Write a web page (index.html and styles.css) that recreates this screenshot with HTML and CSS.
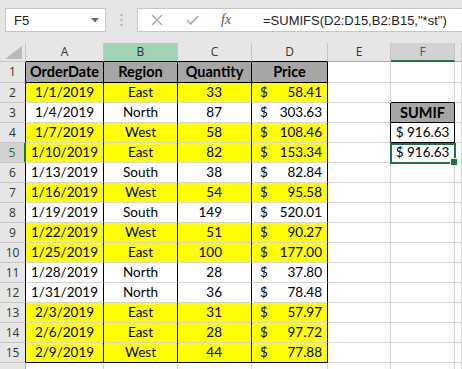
FILE: index.html
```html
<!DOCTYPE html>
<html lang="en">
<head>
    <meta charset="UTF-8">
    <meta name="viewport" content="width=device-width, initial-scale=1.0">
    <title>SUMIFS - Excel</title>
    <link rel="stylesheet" href="styles.css">
</head>
<body>
    <div class="toolbar">
        <div class="namebox">
            <span>F5</span>
            <svg width="8" height="5" viewBox="0 0 8 5"><path d="M0 0H8L4 4.5Z" fill="#6a6a6a"/></svg>
        </div>
        <div class="grip">
            <svg width="3" height="12" viewBox="0 0 3 12"><rect x="0.5" y="0" width="2" height="2" fill="#b4b4b4"/><rect x="0.5" y="5" width="2" height="2" fill="#b4b4b4"/><rect x="0.5" y="10" width="2" height="2" fill="#b4b4b4"/></svg>
        </div>
        <div class="formula">
            <div class="fx-buttons">
                <svg class="btn-cancel" width="12" height="12" viewBox="0 0 12 12"><path d="M1 1L11 11M11 1L1 11" stroke="#a8a8a8" stroke-width="1.4" fill="none"/></svg>
                <svg class="btn-enter" width="13" height="10" viewBox="0 0 13 10"><path d="M1 5.2L4.6 8.8L12 1.2" stroke="#a8a8a8" stroke-width="1.6" fill="none"/></svg>
                <span class="fx">fx</span>
            </div>
            <div class="formula-text">=SUMIFS(D2:D15,B2:B15,"*st")</div>
        </div>
    </div>

    <div class="sheet">
        <div class="row head">
            <div class="c corner"><svg width="17" height="13" viewBox="0 0 17 13"><path d="M17 0V13H0Z" fill="#b9b9b9"/></svg></div>
            <div class="c ch tb">A</div>
            <div class="c ch tb hover">B</div>
            <div class="c ch tb">C</div>
            <div class="c ch tb">D</div>
            <div class="c ch">E</div>
            <div class="c ch active">F</div>
            <div class="c ch"></div>
        </div>

        <div class="row r1">
            <div class="c rh tl">1</div>
            <div class="c t th">OrderDate</div>
            <div class="c t th">Region</div>
            <div class="c t th">Quantity</div>
            <div class="c t th">Price</div>
            <div class="c"></div>
            <div class="c"></div>
            <div class="c"></div>
        </div>
        <div class="row">
            <div class="c rh tl">2</div>
            <div class="c t y date">1/1/2019</div>
            <div class="c t y region">East</div>
            <div class="c t y qty">33</div>
            <div class="c t y price"><span>$</span><span>58.41</span></div>
            <div class="c"></div>
            <div class="c box-top"></div>
            <div class="c"></div>
        </div>
        <div class="row">
            <div class="c rh tl">3</div>
            <div class="c t date">1/4/2019</div>
            <div class="c t region">North</div>
            <div class="c t qty">87</div>
            <div class="c t price"><span>$</span><span>303.63</span></div>
            <div class="c box-left"></div>
            <div class="c box sumif">SUMIF</div>
            <div class="c"></div>
        </div>
        <div class="row">
            <div class="c rh tl">4</div>
            <div class="c t y date">1/7/2019</div>
            <div class="c t y region">West</div>
            <div class="c t y qty">58</div>
            <div class="c t y price"><span>$</span><span>108.46</span></div>
            <div class="c box-left"></div>
            <div class="c box result">$ 916.63</div>
            <div class="c"></div>
        </div>
        <div class="row">
            <div class="c rh tl selected">5</div>
            <div class="c t y date">1/10/2019</div>
            <div class="c t y region">East</div>
            <div class="c t y qty">82</div>
            <div class="c t y price"><span>$</span><span>153.34</span></div>
            <div class="c"></div>
            <div class="c result current">$ 916.63</div>
            <div class="c"></div>
        </div>
        <div class="row">
            <div class="c rh tl">6</div>
            <div class="c t date">1/13/2019</div>
            <div class="c t region">South</div>
            <div class="c t qty">38</div>
            <div class="c t price"><span>$</span><span>82.84</span></div>
            <div class="c"></div>
            <div class="c"></div>
            <div class="c"></div>
        </div>
        <div class="row">
            <div class="c rh tl">7</div>
            <div class="c t y date">1/16/2019</div>
            <div class="c t y region">West</div>
            <div class="c t y qty">54</div>
            <div class="c t y price"><span>$</span><span>95.58</span></div>
            <div class="c"></div>
            <div class="c"></div>
            <div class="c"></div>
        </div>
        <div class="row">
            <div class="c rh tl">8</div>
            <div class="c t date">1/19/2019</div>
            <div class="c t region">South</div>
            <div class="c t qty">149</div>
            <div class="c t price"><span>$</span><span>520.01</span></div>
            <div class="c"></div>
            <div class="c"></div>
            <div class="c"></div>
        </div>
        <div class="row">
            <div class="c rh tl">9</div>
            <div class="c t y date">1/22/2019</div>
            <div class="c t y region">West</div>
            <div class="c t y qty">51</div>
            <div class="c t y price"><span>$</span><span>90.27</span></div>
            <div class="c"></div>
            <div class="c"></div>
            <div class="c"></div>
        </div>
        <div class="row">
            <div class="c rh tl">10</div>
            <div class="c t y date">1/25/2019</div>
            <div class="c t y region">East</div>
            <div class="c t y qty">100</div>
            <div class="c t y price"><span>$</span><span>177.00</span></div>
            <div class="c"></div>
            <div class="c"></div>
            <div class="c"></div>
        </div>
        <div class="row">
            <div class="c rh tl">11</div>
            <div class="c t date">1/28/2019</div>
            <div class="c t region">North</div>
            <div class="c t qty">28</div>
            <div class="c t price"><span>$</span><span>37.80</span></div>
            <div class="c"></div>
            <div class="c"></div>
            <div class="c"></div>
        </div>
        <div class="row">
            <div class="c rh tl">12</div>
            <div class="c t date">1/31/2019</div>
            <div class="c t region">North</div>
            <div class="c t qty">36</div>
            <div class="c t price"><span>$</span><span>78.48</span></div>
            <div class="c"></div>
            <div class="c"></div>
            <div class="c"></div>
        </div>
        <div class="row">
            <div class="c rh tl">13</div>
            <div class="c t y date">2/3/2019</div>
            <div class="c t y region">East</div>
            <div class="c t y qty">31</div>
            <div class="c t y price"><span>$</span><span>57.97</span></div>
            <div class="c"></div>
            <div class="c"></div>
            <div class="c"></div>
        </div>
        <div class="row">
            <div class="c rh tl">14</div>
            <div class="c t y date">2/6/2019</div>
            <div class="c t y region">East</div>
            <div class="c t y qty">28</div>
            <div class="c t y price"><span>$</span><span>97.72</span></div>
            <div class="c"></div>
            <div class="c"></div>
            <div class="c"></div>
        </div>
        <div class="row r15">
            <div class="c rh tl">15</div>
            <div class="c t y date">2/9/2019</div>
            <div class="c t y region">West</div>
            <div class="c t y qty">44</div>
            <div class="c t y price"><span>$</span><span>77.88</span></div>
            <div class="c"></div>
            <div class="c"></div>
            <div class="c"></div>
        </div>
        <div class="row">
            <div class="c rh"></div>
            <div class="c"></div>
            <div class="c"></div>
            <div class="c"></div>
            <div class="c"></div>
            <div class="c"></div>
            <div class="c"></div>
            <div class="c"></div>
        </div>
    </div>
</body>
</html>
```

FILE: styles.css
```css
* {
    box-sizing: border-box;
}
body {
    margin: 0;
    width: 462px;
    height: 369px;
    overflow: hidden;
    background-color: white;
    font-family: "Lato", "Liberation Sans", sans-serif;
    color: #000;
}

/* formula bar */
.toolbar {
    height: 43px;
    background-color: #e6e6e6;
    display: flex;
    align-items: flex-start;
    padding-top: 8px;
    font-family: "Liberation Sans", Arial, sans-serif;
}
.namebox {
    margin-left: 5px;
    width: 101px;
    height: 24px;
    background-color: white;
    border: 1px solid #c6c6c6;
    display: flex;
    align-items: center;
    justify-content: space-between;
    padding: 0 6px 0 8px;
    font-size: 13px;
    color: #222;
}
.grip {
    width: 31px;
    display: flex;
    justify-content: center;
    padding-top: 6px;
}
.formula {
    flex: 1;
    height: 24px;
    background-color: white;
    border: 1px solid #c6c6c6;
    border-right: none;
    display: flex;
    align-items: center;
}
.fx-buttons {
    width: 110px;
    height: 100%;
    display: flex;
    align-items: center;
    padding-left: 13px;
    gap: 23px;
}
.fx {
    font-family: "Liberation Serif", serif;
    font-style: italic;
    font-size: 14px;
    color: #555;
    margin-left: -1px;
}
.formula-text {
    padding-left: 15px;
    font-size: 13px;
    color: #222;
    white-space: nowrap;
}

/* grid */
.row {
    display: grid;
    grid-template-columns: 26px 78px 74px 74px 76px 63px 64px 7px;
    height: 20px;
}
.row.head {
    height: 19px;
    background-color: #e6e6e6;
}
.row.r1 {
    height: 21px;
}
.c {
    border-right: 1px solid #d4d4d4;
    border-bottom: 1px solid #d4d4d4;
    font-size: 13.5px;
    line-height: 19px;
    white-space: nowrap;
    overflow: hidden;
}
.corner {
    display: flex;
    align-items: flex-end;
    justify-content: flex-end;
    padding: 0 3px 2px 0;
    border-color: #c6c6c6;
}
.ch {
    font-family: "Open Sans", sans-serif;
    font-size: 12px;
    line-height: 18px;
    text-align: center;
    color: #333;
    border-right-color: #c6c6c6;
    border-bottom-color: #ababab;
}
.ch.tb {
    border-bottom-color: #000;
}
.ch.hover {
    background-color: #9fd5b5;
}
.ch.active {
    background-color: #d2d2d2;
    color: #217346;
    border-bottom: 2px solid #217346;
    line-height: 17px;
}
.rh {
    font-family: "Open Sans", sans-serif;
    font-size: 12px;
    text-align: center;
    color: #333;
    background-color: #e6e6e6;
    border-bottom-color: #c6c6c6;
    border-right-color: #ababab;
}
.rh.tl {
    border-right-color: #000;
}
.rh.selected {
    background-color: #d2d2d2;
    color: #217346;
    border-right: 2px solid #217346;
}

/* data table */
.t {
    border-right-color: #000;
}
.r1 .c.t {
    border-bottom-color: #000;
    line-height: 20px;
}
.r15 .c.t {
    border-bottom-color: #000;
}
.th {
    background-color: #a6a6a6;
    font-weight: bold;
    font-size: 14.5px;
    text-align: center;
}
.y {
    background-color: #ffff00;
}
.date,
.region {
    text-align: center;
}
.qty {
    text-align: right;
    padding-right: 29px;
}
.price {
    display: flex;
    justify-content: space-between;
    padding: 0 5px 0 8px;
}

/* summary */
.box-top {
    border-bottom-color: #000;
}
.box-left {
    border-right-color: #000;
}
.box {
    border-right-color: #000;
    border-bottom-color: #000;
}
.sumif {
    background-color: #a6a6a6;
    font-weight: bold;
    font-size: 14.5px;
    text-align: center;
}
.result {
    text-align: center;
}
.current {
    position: relative;
    overflow: visible;
}
.current::after {
    content: "";
    position: absolute;
    left: -1px;
    top: 0;
    right: -2px;
    bottom: -2px;
    border: 2px solid #217346;
}
.current::before {
    content: "";
    position: absolute;
    right: -4px;
    bottom: -4px;
    width: 6px;
    height: 6px;
    background-color: #217346;
    border: 1px solid white;
    z-index: 1;
}
```
